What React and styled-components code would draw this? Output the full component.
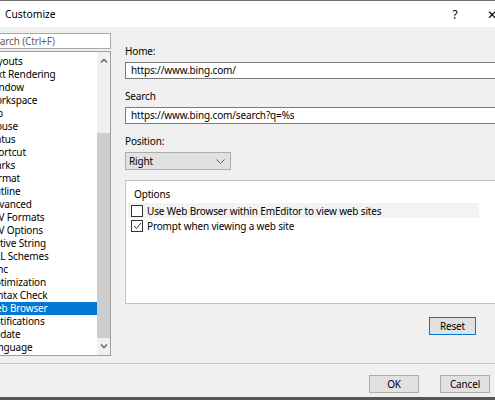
import React from 'react';
import styled, { createGlobalStyle } from 'styled-components';

const Global = createGlobalStyle`
  html, body {
    margin: 0;
    padding: 0;
    background: #555555;
    overflow: hidden;
  }
  body {
    font-family: "Noto Sans", "Open Sans", sans-serif;
    font-size: 10px;
    letter-spacing: -0.15px;
    color: #000;
  }
`;

const Window = styled.div`
  width: 530px;
  height: 396px;
  margin-left: -15px;
  border-top: 1px solid #6d6d6d;
  background: #f0f0f0;
  display: flex;
  flex-direction: column;
`;

const TitleBar = styled.div`
  height: 26px;
  background: #fff;
  display: flex;
  align-items: center;
  padding-left: 20px;
  font-size: 10.3px;
  letter-spacing: 0;
`;

const Title = styled.span`
  flex: 1;
`;

const TitleButton = styled.span`
  width: ${p => p.w}px;
  text-align: center;
  font-size: ${p => p.size || 12}px;
`;

const Body = styled.div`
  flex: 1;
  display: flex;
  gap: 14px;
  padding-top: 6px;
`;

const LeftColumn = styled.div`
  width: 126px;
  display: flex;
  flex-direction: column;
  gap: 2px;
`;

const SearchBox = styled.div`
  height: 14px;
  border: 1px solid #a8a8a8;
  background: #fff;
  padding: 0 3px;
  line-height: 14px;
  color: #5f5f5f;
  white-space: nowrap;
`;

const ListBox = styled.div`
  height: 303px;
  border: 1px solid #a0a0a0;
  background: #fff;
  display: flex;
`;

const Items = styled.div`
  flex: 1;
  padding-top: 3px;
  display: flex;
  flex-direction: column;
`;

const Item = styled.div`
  height: 13px;
  line-height: 13px;
  padding-left: 1px;
  white-space: nowrap;
  background: ${p => (p.selected ? '#0078d7' : 'transparent')};
  color: ${p => (p.selected ? '#fff' : '#000')};
`;

const ScrollBar = styled.div`
  width: 13px;
  background: #f0f0f0;
  display: flex;
  flex-direction: column;
  align-items: center;
`;

const Arrow = styled.div`
  height: 17px;
  display: flex;
  align-items: center;
  justify-content: center;
`;

const Track = styled.div`
  flex: 1;
  width: 100%;
  display: flex;
  flex-direction: column;
  padding-top: 64px;
`;

const Thumb = styled.div`
  height: 205px;
  background: #cdcdcd;
`;

const RightPanel = styled.div`
  width: 380px;
  padding-top: 11px;
  display: flex;
  flex-direction: column;
`;

const Label = styled.div`
  height: 14px;
  line-height: 14px;
  margin: ${p => (p.first ? '0' : '10px')} 0 4px;
`;

const TextInput = styled.div`
  height: 15px;
  border: 1px solid #7a7a7a;
  background: #fff;
  padding-left: 5px;
  line-height: 15px;
  white-space: nowrap;
`;

const Select = styled.div`
  width: 96px;
  height: 16px;
  border: 1px solid #adadad;
  background: #e1e1e1;
  display: flex;
  align-items: center;
  justify-content: space-between;
  padding: 0 5px 0 3px;
  margin-right: auto;
`;

const GroupBox = styled.div`
  margin-top: 10px;
  height: 122px;
  border: 1px solid #c4c4c4;
  background: #fff;
  padding: 0 25px 0 2px;
  display: flex;
  flex-direction: column;
`;

const GroupTitle = styled.div`
  height: 14px;
  line-height: 14px;
  padding: 6px 0 0 6px;
  margin-bottom: 2px;
`;

const CheckRow = styled.div`
  height: 15px;
  display: flex;
  align-items: center;
  gap: 4px;
  padding-left: 3px;
  background: ${p => (p.hover ? '#f3f3f3' : 'transparent')};
  white-space: nowrap;
`;

const Box = styled.span`
  width: 10px;
  height: 10px;
  border: 1px solid #333;
  background: #fff;
  display: flex;
  align-items: center;
  justify-content: center;
  flex-shrink: 0;
`;

const Button = styled.div`
  width: ${p => p.w || 48}px;
  height: 16px;
  border: 1px solid ${p => (p.primary ? '#0078d7' : '#adadad')};
  background: #e1e1e1;
  display: flex;
  align-items: center;
  justify-content: center;
`;

const ResetRow = styled.div`
  display: flex;
  justify-content: flex-end;
  padding-right: 29px;
  margin-top: 13px;
`;

const Footer = styled.div`
  height: 34px;
  border-top: 1px solid #c8c8c8;
  display: flex;
  justify-content: flex-end;
  align-items: flex-start;
  gap: 21px;
  padding: 11px 25px 0 0;
  box-sizing: border-box;
`;

const items = [
  'Layouts', 'Text Rendering', 'Window', 'Workspace', 'Tab', 'Mouse', 'Status',
  'Shortcut', 'Marks', 'Format', 'Outline', 'Advanced', 'CSV Formats',
  'CSV Options', 'Native String', 'URL Schemes', 'Sync', 'Optimization',
  'Syntax Check', 'Web Browser', 'Notifications', 'Update', 'Language',
];

const Chevron = ({ up }) => (
  <svg width="8" height="5" viewBox="0 0 8 5">
    <path d={up ? 'M1 4.5L4 1.5L7 4.5' : 'M1 0.5L4 3.5L7 0.5'} fill="none" stroke="#606060" strokeWidth="1.3" />
  </svg>
);

export default function App() {
  return (
    <>
      <Global />
      <Window>
        <TitleBar>
          <Title>Customize</Title>
          <TitleButton w={28} size={12}>?</TitleButton>
          <TitleButton w={46} size={12}>✕</TitleButton>
        </TitleBar>
        <Body>
          <LeftColumn>
            <SearchBox>Search (Ctrl+F)</SearchBox>
            <ListBox>
              <Items>
                {items.map(name => (
                  <Item key={name} selected={name === 'Web Browser'}>{name}</Item>
                ))}
              </Items>
              <ScrollBar>
                <Arrow><Chevron up /></Arrow>
                <Track><Thumb /></Track>
                <Arrow><Chevron /></Arrow>
              </ScrollBar>
            </ListBox>
          </LeftColumn>
          <RightPanel>
            <Label first>Home:</Label>
            <TextInput>https://www.bing.com/</TextInput>
            <Label>Search</Label>
            <TextInput>https://www.bing.com/search?q=%s</TextInput>
            <Label>Position:</Label>
            <Select>
              <span>Right</span>
              <svg width="9" height="5" viewBox="0 0 9 5">
                <path d="M0.5 0.5L4.5 4.5L8.5 0.5" fill="none" stroke="#606060" strokeWidth="1" />
              </svg>
            </Select>
            <GroupBox>
              <GroupTitle>Options</GroupTitle>
              <CheckRow hover>
                <Box />
                Use Web Browser within EmEditor to view web sites
              </CheckRow>
              <CheckRow>
                <Box>
                  <svg width="9" height="8" viewBox="0 0 9 8">
                    <path d="M1 4L3.5 6.5L8 1" fill="none" stroke="#333" strokeWidth="1" />
                  </svg>
                </Box>
                Prompt when viewing a web site
              </CheckRow>
            </GroupBox>
            <ResetRow>
              <Button primary w={45}>Reset</Button>
            </ResetRow>
          </RightPanel>
        </Body>
        <Footer>
          <Button w={48}>OK</Button>
          <Button w={48}>Cancel</Button>
        </Footer>
      </Window>
    </>
  );
}
